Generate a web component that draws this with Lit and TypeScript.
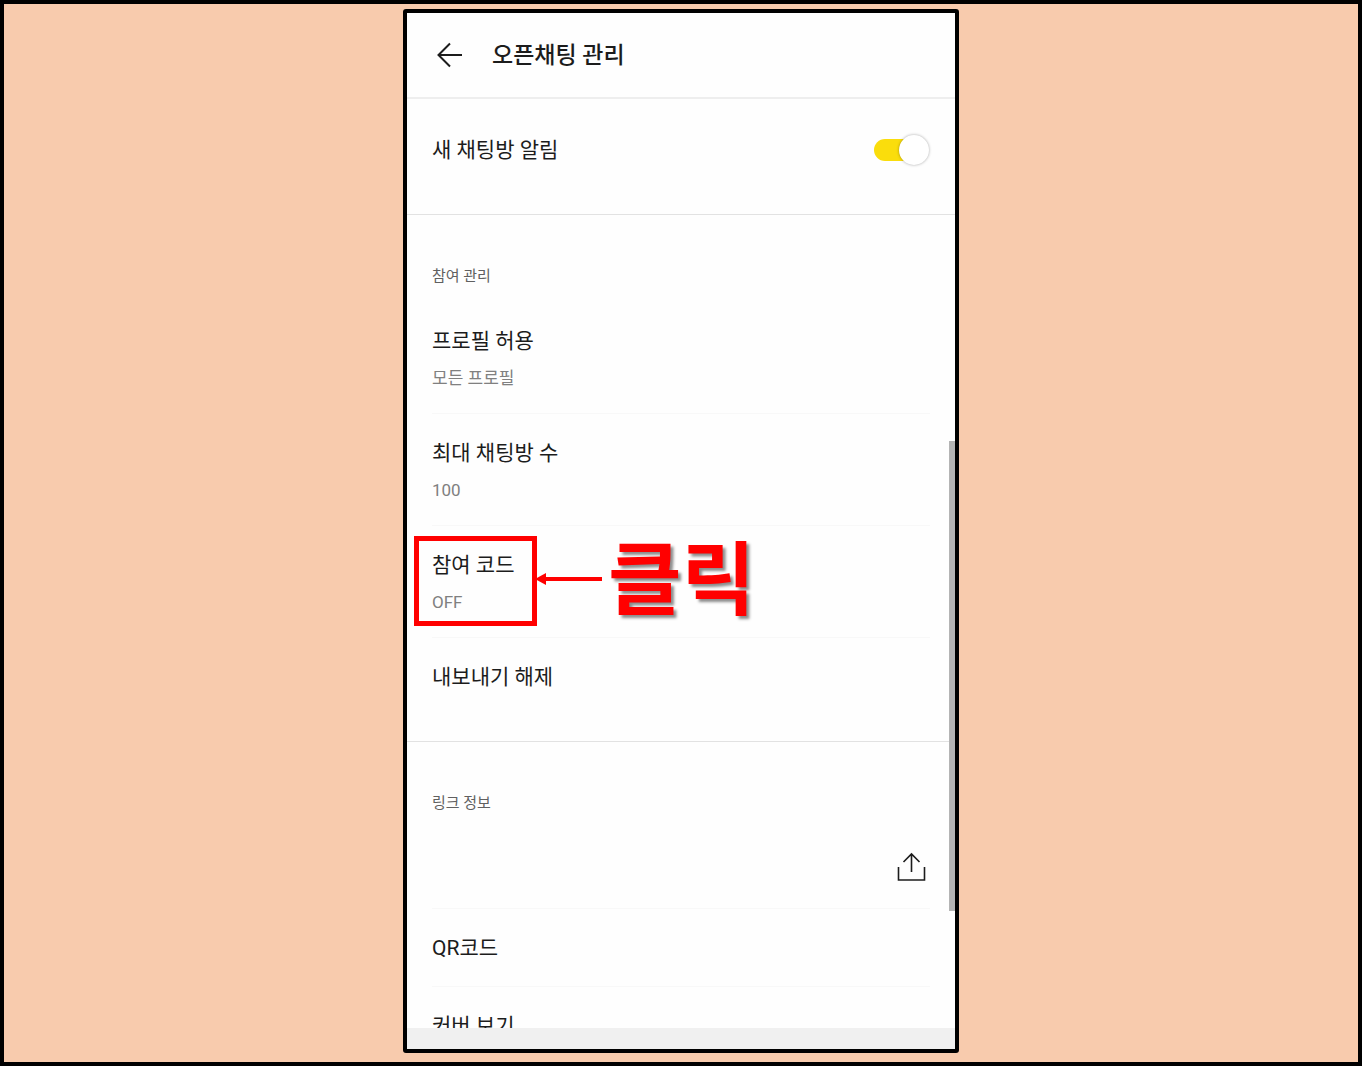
import { LitElement, html, css, nothing } from "lit";
import { customElement, property, state } from "lit/decorators.js";

@customElement("setting-row")
class SettingRow extends LitElement {
  @property() heading = "";
  @property() value = "";

  static styles = css`
    :host {
      display: block;
      position: relative;
    }
    .row {
      display: flex;
      flex-direction: column;
      gap: 8px;
      width: 100%;
      padding: 23px 0 0;
      border: 0;
      background: none;
      color: #1c1c1c;
      font: inherit;
      text-align: left;
      cursor: pointer;
    }
    .heading {
      font-size: 21px;
      line-height: 32px;
    }
    .value {
      color: #808080;
      font-size: 17px;
      line-height: 27px;
    }
  `;

  render() {
    return html`
      <button class="row" type="button">
        <span class="heading">${this.heading}</span>
        ${this.value ? html`<span class="value">${this.value}</span>` : nothing}
      </button>
      <slot></slot>
    `;
  }
}

@customElement("click-callout")
class ClickCallout extends LitElement {
  static styles = css`
    :host {
      position: absolute;
      top: 10px;
      left: -18px;
      display: flex;
      align-items: center;
      pointer-events: none;
    }
    .frame {
      box-sizing: border-box;
      width: 123px;
      height: 90px;
      border: 5px solid #ff0000;
    }
    .arrow {
      display: block;
      width: 67px;
      height: 14px;
      margin: 0 6px 4px -2px;
    }
    .word {
      color: #ff0000;
      font-size: 80px;
      font-weight: 700;
      line-height: 90px;
      white-space: nowrap;
      text-shadow: 3px 3px 3px rgba(0, 0, 0, 0.45);
    }
  `;

  render() {
    return html`
      <div class="frame"></div>
      <svg class="arrow" viewBox="0 0 67 14" aria-hidden="true">
        <path d="M0 7 11 1v12z" fill="#f00" />
        <path d="M10 7h57" stroke="#f00" stroke-width="4" />
      </svg>
      <span class="word">클릭</span>
    `;
  }
}

@customElement("app-root")
class AppRoot extends LitElement {
  @state() private notify = true;

  static styles = css`
    :host {
      display: block;
      font-family: Roboto, "Noto Sans CJK KR", sans-serif;
      color: #1c1c1c;
    }
    .page {
      box-sizing: border-box;
      display: flex;
      justify-content: center;
      height: 100vh;
      padding: 5px 5px 9px;
      border: 4px solid #000;
      background: #f8cbad;
    }
    .phone {
      position: relative;
      box-sizing: border-box;
      display: flex;
      flex-direction: column;
      width: 100%;
      max-width: 556px;
      overflow: hidden;
      border: 4px solid #000;
      border-radius: 3px;
      background: #fefefe;
    }
    .bar {
      display: flex;
      flex: none;
      align-items: center;
      gap: 28px;
      height: 84px;
      padding: 0 28px;
      border-bottom: 2px solid #eeeeee;
    }
    .icon-button {
      display: block;
      padding: 0;
      border: 0;
      background: none;
      color: #1c1c1c;
      cursor: pointer;
    }
    .icon {
      display: block;
      fill: none;
      stroke: currentColor;
    }
    .title {
      margin: 0;
      padding-top: 2px;
      font-size: 23px;
      font-weight: 500;
      line-height: 32px;
    }
    .list {
      flex: 1;
      min-height: 0;
      overflow: hidden;
    }
    .section {
      padding: 0 25px;
      border-bottom: 1px solid #e2e2e2;
    }
    .section:last-child {
      border-bottom: 0;
    }
    .toggle-row {
      display: flex;
      align-items: center;
      justify-content: space-between;
      height: 101px;
      padding-bottom: 14px;
      font-size: 21px;
      line-height: 32px;
    }
    .switch {
      position: relative;
      appearance: none;
      width: 56px;
      height: 32px;
      margin: 0;
      cursor: pointer;
    }
    .switch::before {
      content: "";
      position: absolute;
      inset: 5px 4px 5px 0;
      border-radius: 11px;
      background: #cccccc;
    }
    .switch:checked::before {
      background: #fadd0c;
    }
    .switch::after {
      content: "";
      position: absolute;
      top: 1px;
      left: 0;
      width: 30px;
      height: 30px;
      border-radius: 50%;
      background: #fff;
      box-shadow: 0 0 3px rgba(0, 0, 0, 0.35);
    }
    .switch:checked::after {
      left: 25px;
    }
    .caption {
      margin: 0;
      padding: 49px 0 14px;
      color: #606060;
      font-size: 15px;
      font-weight: 400;
      line-height: 24px;
    }
    .item {
      box-sizing: border-box;
      height: 112px;
      border-bottom: 1px solid #f8f8f8;
    }
    .item.last {
      height: 103px;
      border-bottom: 0;
    }
    .item.single {
      height: 78px;
    }
    .link-row {
      box-sizing: border-box;
      display: flex;
      align-items: center;
      justify-content: flex-end;
      height: 80px;
      padding: 0 4px 4px 0;
      border-bottom: 1px solid #f8f8f8;
    }
    .nav {
      flex: none;
      height: 21px;
      background: #f0f0f0;
    }
    .thumb {
      position: absolute;
      top: 428px;
      right: 0;
      width: 6px;
      height: 470px;
      background: #b4b4b4;
    }
  `;

  private toggle(event: Event) {
    this.notify = (event.target as HTMLInputElement).checked;
  }

  render() {
    return html`
      <div class="page">
        <main class="phone">
          <header class="bar">
            <button class="icon-button" type="button" aria-label="뒤로">
              <svg class="icon" width="29" height="26" viewBox="0 0 29 26" stroke-width="2">
                <path d="M15 1.500 3.500 13 15 24.500M3.500 13H27" />
              </svg>
            </button>
            <h1 class="title">오픈채팅 관리</h1>
          </header>
          <div class="list">
            <section class="section">
              <div class="toggle-row">
                <label for="notify">새 채팅방 알림</label>
                <input
                  class="switch"
                  id="notify"
                  type="checkbox"
                  role="switch"
                  .checked=${this.notify}
                  @change=${this.toggle}
                />
              </div>
            </section>
            <section class="section">
              <h2 class="caption">참여 관리</h2>
              <setting-row class="item" heading="프로필 허용" value="모든 프로필"></setting-row>
              <setting-row class="item" heading="최대 채팅방 수" value="100"></setting-row>
              <setting-row class="item" heading="참여 코드" value="OFF">
                <click-callout></click-callout>
              </setting-row>
              <setting-row class="item last" heading="내보내기 해제"></setting-row>
            </section>
            <section class="section">
              <h2 class="caption">링크 정보</h2>
              <div class="link-row">
                <button class="icon-button" type="button" aria-label="공유">
                  <svg class="icon" width="29" height="30" viewBox="0 0 29 30" stroke-width="1.600">
                    <path d="M1.500 15v13h26V15M14.500 20V2M6.500 10l8-8 8 8" />
                  </svg>
                </button>
              </div>
              <setting-row class="item single" heading="QR코드"></setting-row>
              <setting-row class="item single" heading="커버 보기"></setting-row>
            </section>
          </div>
          <div class="nav"></div>
          <div class="thumb"></div>
        </main>
      </div>
    `;
  }
}
